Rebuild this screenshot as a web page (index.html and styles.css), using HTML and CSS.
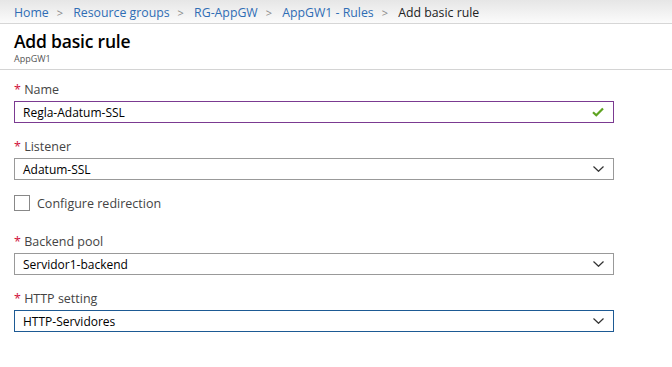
FILE: index.html
```html
<!DOCTYPE html>
<html lang="es">
<head>
  <meta charset="UTF-8" />
  <meta name="viewport" content="width=device-width, initial-scale=1.0" />
  <title>Add basic rule</title>
  <link rel="stylesheet" href="styles.css">
</head>
<body>
  <div class="crumbs">
    <a href="#">Home</a><span class="sep">&gt;</span>
    <a href="#">Resource groups</a><span class="sep">&gt;</span>
    <a href="#">RG-AppGW</a><span class="sep">&gt;</span>
    <a href="#">AppGW1 - Rules</a><span class="sep">&gt;</span>
    <span class="current">Add basic rule</span>
  </div>

  <div class="header">
    <h1>Add basic rule</h1>
    <div class="sub">AppGW1</div>
  </div>

  <div class="form">
    <div class="field">
      <label><span class="req">*</span> Name</label>
      <div class="box valid">
        <span>Regla-Adatum-SSL</span>
        <svg width="12" height="10" viewBox="0 0 12 10"><path d="M1 5.2 L4.3 8.3 L11 1.5" fill="none" stroke="#5ea321" stroke-width="2.2"/></svg>
      </div>
    </div>

    <div class="field">
      <label><span class="req">*</span> Listener</label>
      <div class="box">
        <span>Adatum-SSL</span>
        <svg class="chev" width="11" height="6" viewBox="0 0 11 6"><path d="M0.5 0.5 L5.5 5.3 L10.5 0.5" fill="none" stroke="#333" stroke-width="1.2"/></svg>
      </div>
    </div>

    <div class="check">
      <span class="tick"></span>
      <span>Configure redirection</span>
    </div>

    <div class="field">
      <label><span class="req">*</span> Backend pool</label>
      <div class="box">
        <span>Servidor1-backend</span>
        <svg class="chev" width="11" height="6" viewBox="0 0 11 6"><path d="M0.5 0.5 L5.5 5.3 L10.5 0.5" fill="none" stroke="#333" stroke-width="1.2"/></svg>
      </div>
    </div>

    <div class="field">
      <label><span class="req">*</span> HTTP setting</label>
      <div class="box focus">
        <span>HTTP-Servidores</span>
        <svg class="chev" width="11" height="6" viewBox="0 0 11 6"><path d="M0.5 0.5 L5.5 5.3 L10.5 0.5" fill="none" stroke="#333" stroke-width="1.2"/></svg>
      </div>
    </div>
  </div>
</body>
</html>
```

FILE: styles.css
```css
body {
  margin: 0;
  padding: 0;
  font-family: "Open Sans", "Noto Sans", sans-serif;
  background: #fff;
  color: #000;
}
.crumbs {
  height: 24px;
  box-sizing: border-box;
  padding: 4px 0 0 14px;
  background: linear-gradient(#e6e6e6, #fbfbfb);
  border-bottom: 1px solid #d6d6d6;
  font-size: 12.3px;
  white-space: nowrap;
}
.crumbs a {
  color: #2f6db5;
  text-decoration: none;
}
.crumbs .sep {
  color: #888;
  margin: 0 7px 0 8px;
  font-size: 11px;
}
.crumbs .current {
  color: #222;
}
.header {
  padding: 5px 14px 0;
  height: 40px;
  border-bottom: 1px solid #d4d4d4;
}
.header h1 {
  margin: 0;
  font-size: 17.5px;
  font-weight: 600;
  line-height: 24px;
  letter-spacing: -0.2px;
}
.sub {
  font-size: 9px;
  color: #555;
  line-height: 12px;
}
.form {
  padding: 11px 14px 0;
  width: 600px;
}
.field {
  margin-bottom: 15px;
}
.field label {
  display: block;
  font-size: 12.5px;
  color: #444;
  line-height: 18px;
  margin-bottom: 2px;
}
.req {
  color: #d0103a;
}
.box {
  height: 22px;
  box-sizing: border-box;
  border: 1px solid #999;
  display: flex;
  align-items: center;
  justify-content: space-between;
  padding: 0 9px 0 8px;
  font-size: 12px;
}
.box.valid {
  border-color: #7b3a91;
}
.box.focus {
  border-color: #1d5a94;
}
.check {
  display: flex;
  align-items: center;
  gap: 7px;
  font-size: 12.5px;
  color: #444;
  margin: 1px 0 22px;
  height: 16px;
}
.tick {
  width: 16px;
  height: 16px;
  box-sizing: border-box;
  border: 1px solid #888;
}
```
